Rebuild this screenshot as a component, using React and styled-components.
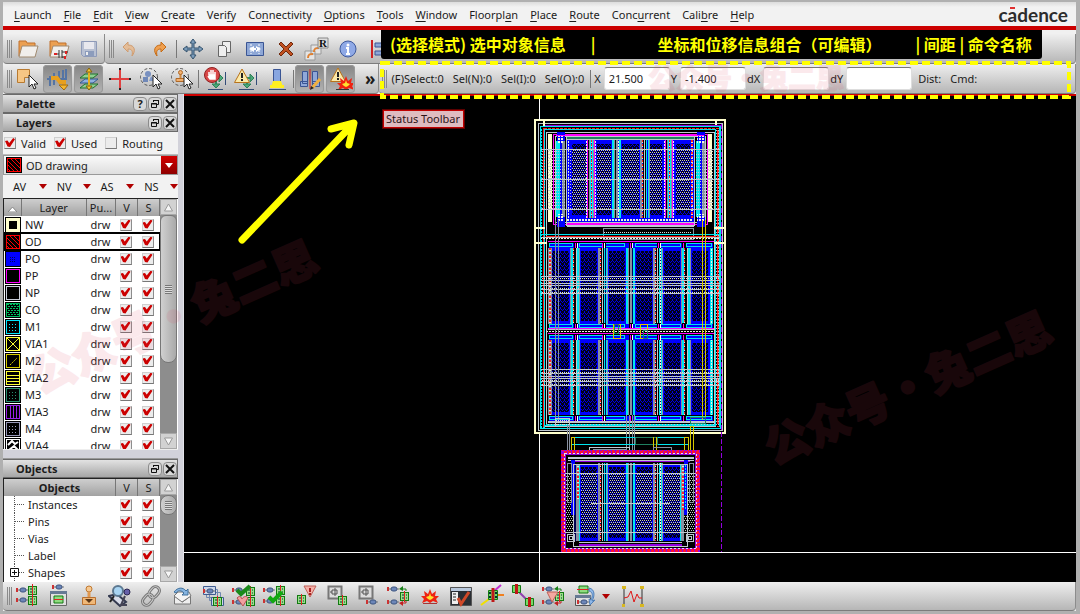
import React, { useState } from 'react';
import styled, { createGlobalStyle, css } from 'styled-components';

const GlobalStyle = createGlobalStyle`
  * {
    box-sizing: border-box;
  }

  body {
    margin: 0;
    background: #b0b0b0;
    color: #1c1c1c;
    font-family: "Noto Sans", "Noto Sans CJK SC", sans-serif;
    font-size: 11px;
    line-height: 17px;
  }

  button, input, select {
    font: inherit;
    color: inherit;
  }
`;

const Window = styled.div`
  position: relative;
  display: flex;
  flex-direction: column;
  height: 100vh;
  overflow: hidden;
  background: #f0f0f0;
  border: solid #b0b0b0;
  border-width: 2px 4px 3px 3px;
`;

const MenuBar = styled.nav`
  display: flex;
  align-items: center;
  gap: 12px;
  height: 28px;
  flex: none;
  padding: 0 8px 0 11px;
  background: linear-gradient(#dcdcdc, #f2f2f2 5px);
  border-bottom: 4px solid #cc0000;
`;

const MenuItem = styled.button`
  border: 0;
  padding: 0;
  background: none;
  white-space: nowrap;
  cursor: pointer;

  u {
    text-underline-offset: 2px;
  }
`;

const Logo = styled.div`
  margin-left: auto;
  font-family: Lato, sans-serif;
  font-weight: bold;
  font-size: 19px;
  color: #2c2c2c;
`;

const Macron = styled.span`
  position: relative;

  &::before {
    content: '';
    position: absolute;
    top: 4px;
    left: 2px;
    right: 2px;
    height: 2px;
    background: #e03030;
  }
`;

const Toolbars = styled.div`
  position: relative;
  flex: none;
  padding-top: 4px;
`;

const ToolRow = styled.div`
  display: flex;
  height: 30px;
`;

const barLook = css`
  display: flex;
  align-items: center;
  gap: 2px;
  padding: 0 1px;
  background: linear-gradient(#efefef, #b6b6b6);
  border-right: 1px solid #8c8c8c;
  border-bottom: 1px solid #7c7c7c;
  border-radius: 0 0 4px 4px;
`;

const ToolGroup = styled.div`
  ${barLook}
  flex: ${p => (p.$grow ? 1 : 'none')};
`;

const Grip = styled.span`
  flex: none;
  width: 5px;
  height: 18px;
  margin: 0 -2px 0 3px;
  border: solid #8a8a8a;
  border-width: 0 1px;
  background: linear-gradient(90deg, transparent 1px, #8a8a8a 1px, #8a8a8a 2px, transparent 2px);
`;

const Separator = styled.span`
  flex: none;
  width: 1px;
  height: 18px;
  margin-right: -1px;
  background: #777;
`;

const ToolButton = styled.button`
  flex: none;
  display: flex;
  align-items: center;
  justify-content: center;
  width: 29px;
  height: 28px;
  padding: 0;
  border: 0;
  border-radius: 4px;
  background: ${p => (p.$on ? 'linear-gradient(#858585, #b4b4b4)' : 'none')};
  box-shadow: ${p => (p.$on ? 'inset 0 0 0 1px #999' : 'none')};
  cursor: pointer;

  &:hover {
    background-color: #cfcfcf;
  }
`;

const More = styled.button`
  margin: 0 2px 0 8px;
  padding: 0;
  border: 0;
  background: none;
  font-size: 17px;
  font-weight: bold;
`;

const StatusBar = styled.div`
  ${barLook}
  flex: 1;
  gap: 4px;
  padding: 0;
`;

const StatusGroup = styled.div`
  display: flex;
  align-items: center;
  gap: 9px;
  padding: 0 2px;
  white-space: nowrap;
`;

const CoordGroup = styled.div`
  display: flex;
  align-items: center;
  gap: 1px;
`;

const Coord = styled.label`
  display: flex;
  align-items: center;
  gap: 3px;
`;

const CoordInput = styled.input`
  width: 66px;
  height: 23px;
  padding: 0 4px;
  border: 1px solid #ddd;
  border-top-color: #777;
  border-radius: 3px;
  background: #fff;
`;

const Banner = styled.div`
  position: absolute;
  top: 0;
  left: 378px;
  display: flex;
  align-items: center;
  height: 29px;
  padding: 0 10px 0 9px;
  border-radius: 0 0 3px 3px;
  background: #000;
  color: #ffff00;
  font-family: "Noto Sans CJK SC", sans-serif;
  font-weight: bold;
  font-size: 16px;
  white-space: nowrap;
  z-index: 2;
`;

const BannerPart = styled.span`
  margin-left: ${p => p.$gap || 0}px;
`;

const DashedFrame = styled.svg`
  position: absolute;
  top: 30px;
  left: 377px;
  width: calc(100% - 386px);
  height: 40px;
  pointer-events: none;
  z-index: 3;
  overflow: visible;
`;

const Body = styled.main`
  display: flex;
  flex: 1;
  min-height: 0;
`;

const Side = styled.aside`
  display: flex;
  flex-direction: column;
  flex: none;
  width: 181px;
  padding-right: 5px;
  background: #d2d2da;
  border-right: 1px solid #e4e4ea;
`;

const PanelHead = styled.header`
  display: flex;
  align-items: center;
  gap: 1px;
  height: 19px;
  flex: none;
  padding: 0 0 0 13px;
  background: linear-gradient(#e2e2e2, #a6a6a6);
  border: 1px solid #6a6a6a;
  border-width: 1px 1px 1px 0;
`;

const PanelTitle = styled.h2`
  flex: 1;
  margin: 0;
  font-size: 11px;
  font-weight: bold;
`;

const HeadButton = styled.button`
  display: flex;
  align-items: center;
  justify-content: center;
  width: 14px;
  height: 14px;
  padding: 0;
  border: 1px solid #8c8c8c;
  border-radius: 4px;
  background: #d8d8d8;
`;

const Checks = styled.div`
  display: flex;
  align-items: center;
  height: 23px;
  flex: none;
  gap: 8px;
  padding-left: 1px;
  background: #f2f2f2;
  border-bottom: 1px solid #bbb;
`;

const CheckLabel = styled.label`
  display: flex;
  align-items: center;
  gap: 5px;
`;

const Tick = styled.input.attrs({ type: 'checkbox' })`
  appearance: none;
  position: relative;
  display: block;
  width: 12px;
  height: 12px;
  margin: 0;
  border: 1px solid #cfcfcf;
  border-right-color: #8d8d8d;
  border-bottom-color: #777;
  background: #ececec;

  &:checked::after {
    content: '';
    position: absolute;
    inset: 0;
    background: #cc0000;
    clip-path: polygon(0 30%, 25% 25%, 42% 50%, 82% 0, 100% 12%, 50% 90%, 25% 85%);
  }
`;

const Combo = styled.label`
  position: relative;
  display: flex;
  align-items: center;
  gap: 4px;
  flex: none;
  height: 20px;
  padding-left: 2px;
  background: linear-gradient(#fafafa, #dedede);
  border: 1px solid #999;
`;

const ComboSelect = styled.select`
  appearance: none;
  flex: 1;
  min-width: 0;
  height: 18px;
  padding: 0;
  border: 0;
  background: none;
`;

const Caret = styled.span`
  width: 0;
  height: 0;
  border: 4px solid transparent;
  border-top: 5px solid ${p => p.$color || '#b00000'};
  border-bottom: 0;
`;

const ComboArrow = styled.span`
  display: flex;
  align-items: center;
  justify-content: center;
  width: 16px;
  height: 18px;
  background: linear-gradient(#d40000, #8e0000);
`;

const Filters = styled.div`
  display: grid;
  grid-template-columns: repeat(4, 1fr);
  height: 23px;
  flex: none;
  background: #f2f2f2;
`;

const FilterButton = styled.button`
  display: flex;
  align-items: center;
  justify-content: space-between;
  padding: 0 0 0 10px;
  border: 0;
  background: none;
`;

const ListBox = styled.div`
  display: flex;
  flex: ${p => (p.$fill ? '1' : 'none')};
  height: ${p => (p.$fill ? 'auto' : '104px')};
  min-height: 0;
  overflow: hidden;
  background: #fff;
  border: solid #222;
  border-width: 1px 0 0 1px;
`;

const Table = styled.table`
  flex: 1;
  align-self: flex-start;
  table-layout: fixed;
  border-collapse: collapse;
`;

const Th = styled.th`
  width: ${p => (p.$w ? p.$w + 'px' : 'auto')};
  height: 17px;
  padding: 0;
  background: linear-gradient(#cecece, #a2a2a2);
  border-right: 1px solid #777;
  font-weight: ${p => (p.$bold ? 'bold' : 'normal')};
`;

const Row = styled.tr`
  height: 17px;
  outline: ${p => (p.$active ? '2px solid #000' : 'none')};
  outline-offset: -1px;
`;

const Td = styled.td`
  height: 17px;
  padding: 0 0 0 ${p => p.$pad || 0}px;
  line-height: 16px;
`;

const ScrollBar = styled.div`
  display: flex;
  flex-direction: column;
  flex: none;
  width: 17px;
  margin-right: 1px;
  background: #8d8d8d;
`;

const ScrollButton = styled.button`
  display: flex;
  align-items: center;
  justify-content: center;
  height: 16px;
  padding: 0;
  border: 1px solid #a8a8a8;
  background: #d2d2d2;
`;

const Thumb = styled.div`
  display: flex;
  align-items: center;
  justify-content: center;
  height: ${p => p.$size};
  border: 1px solid #777;
  border-radius: ${p => (p.$round ? '8px' : '6px 6px 8px 8px')};
  background: linear-gradient(90deg, #d0d0d0, #a9a9a9);

  &::after {
    content: '';
    width: 7px;
    height: 9px;
    background: repeating-linear-gradient(#777 0 1px, #ddd 1px 2px);
  }
`;

const Track = styled.div`
  flex: 1;
`;

const Gap = styled.div`
  flex: none;
  height: 10px;
  border-top: 1px solid #eee;
  border-bottom: 1px solid #999;
`;

const TreeCell = styled.span`
  display: flex;
  align-items: center;
  gap: 3px;
  padding-left: 6px;
`;

const Canvas = styled.section`
  position: relative;
  flex: 1;
  min-width: 0;
  background: #000;
  border-top: 2px solid #cc0000;
`;

const Drawing = styled.svg`
  position: absolute;
  inset: 0;
  width: 100%;
  height: 100%;
`;

const Tooltip = styled.div`
  position: absolute;
  top: 14px;
  left: 199px;
  padding: 0 3px 0 2px;
  border: 1px solid #c00000;
  outline: 1px solid #5c0000;
  background: #dfbcc0;
  color: #2c1418;
  line-height: 16px;
`;

const BottomBar = styled.footer`
  ${barLook}
  flex: none;
  height: 29px;
`;

const DropMark = styled.button`
  display: flex;
  padding: 0 6px 0 1px;
  border: 0;
  background: none;
`;

const Watermark = styled.svg`
  position: absolute;
  inset: 0;
  width: 100%;
  height: 100%;
  pointer-events: none;
  z-index: 4;
  opacity: 0.11;
  fill: #e04060;
  stroke: #e04060;
  stroke-linejoin: round;
  font-family: "Noto Sans CJK SC", sans-serif;
  font-weight: 900;
  text-anchor: middle;
`;

/* ---------- icons ---------- */

const Ico = ({ children, w = 24 }) => (
  <svg width={w} height="24" viewBox={`0 0 ${w} 24`} fill="none" aria-hidden="true">{children}</svg>
);

const Pin = ({ x, y }) => (
  <g transform={`translate(${x} ${y})`}>
    <path d="M0 0v4" stroke="#c33" strokeWidth="2" />
    <path d="M1 2h3M9 2h2" stroke="#777" />
    <rect x="3" y="0" width="6" height="4" rx="2" fill="#6c86b8" stroke="#3d5580" />
  </g>
);

const Cell = ({ x, y }) => (
  <g transform={`translate(${x} ${y})`}>
    <rect x="0.5" y="0.5" width="8" height="8" fill="#9be08a" stroke="#127a12" />
    <path d="M2 3h2M2 6h2M6 3h1M6 6h1" stroke="#033" />
    <path d="M4.5-1v11" stroke="#d22" />
  </g>
);

const Cursor = ({ x, y }) => (
  <path transform={`translate(${x} ${y})`} d="M0 0v12l3-3 2 5 2-1-2-4h4z" fill="#fff" stroke="#222" />
);

const Bang = ({ x, y }) => (
  <g transform={`translate(${x} ${y})`}>
    <path d="M7 0l2 5 4-3-1 5 4 0-3 3 2 4-5-2-3 2-3-2-5 2 2-4-3-3 4 0-1-5 4 3z" fill="#ee2211" />
    <path d="M7 4l1 3 3 1-2 2-2 1-2-1-2-2 3-1z" fill="#ffe030" />
  </g>
);

const Gate = () => (
  <g>
    <path d="M13 20v-6M12 11h8" stroke="#2f9060" strokeWidth="2" />
    <path d="M16 7l4 4-4 4zM9 17h8l-4 4z" fill="#4aa878" stroke="#2f8058" />
  </g>
);

const Wall = () => <path d="M22.500 5v13M5 22.500h15" stroke="#334c78" />;

const Warn = ({ x, y }) => (
  <g transform={`translate(${x} ${y})`}>
    <path d="M8 1l7.500 13.500H.5z" fill="#fbe9a8" stroke="#b8731c" strokeLinejoin="round" />
    <path d="M8 5v5M8 11v2" stroke="#222" strokeWidth="2" />
  </g>
);

const Folder = ({ children }) => (
  <Ico>
    <path d="M4 19V4h7l1 2h8v4" fill="#eba052" stroke="#c0702c" />
    <path d="M4 20L7 9h16l-3 11z" fill="#f1efec" stroke="#a08a70" />
    {children}
  </Ico>
);

const icons = {
  open: <Folder />,
  openCell: <Folder><path d="M9 17h4M13 13v8M16 13v8M16 15h6M16 20h4" stroke="#333" /><path d="M8 17h3M20 14v3M19 19v3" stroke="#d22" strokeWidth="2" /></Folder>,
  save: <Ico><path d="M4.500 4.500h15v15h-13l-2-2z" fill="#b8c0d2" stroke="#8e9ab8" /><path d="M7 5h10v7H7z" fill="#e8e8ee" /><path d="M8 14h9v5H8z" fill="#8c9cbc" /><path d="M10 15v3" stroke="#eee" strokeWidth="2" /></Ico>,
  undo: <Ico><path d="M6 10l5-5v3c7 0 8 6 4 11 1-5 0-7-4-7v3z" fill="#e4bd98" stroke="#cf9c70" /></Ico>,
  redo: <Ico><path d="M18 10l-5-5v3c-7 0-8 6-4 11-1-5 0-7 4-7v3z" fill="#f0a050" stroke="#c46a14" /></Ico>,
  move: <Ico><path d="M12 2l3 4h-2v5h5V9l4 3-4 3v-2h-5v5h2l-3 4-3-4h2v-5H6v2l-4-3 4-3v2h5V6H9z" fill="#7b9bb9" stroke="#34536f" /></Ico>,
  copy: <Ico><path d="M10.500 4.500h8v11h-8z" fill="#eee" stroke="#666" /><path d="M6.500 8.500h6l2 2v9h-8z" fill="#eee" stroke="#666" /></Ico>,
  stretch: <Ico><path d="M3.500 5.500h17v13h-17z" fill="#8ea7d6" stroke="#3a5594" /><path d="M8 7v10M16 7v10" stroke="#fff" strokeDasharray="2 1" /><path d="M11 9v6l-5-3zM13 9v6l5-3zM10 11h4v2h-4z" fill="#fff" /></Ico>,
  remove: <Ico><path d="M5 7l2-2 5 5 5-5 2 2-5 5 5 5-2 2-5-5-5 5-2-2 5-5z" fill="#c05020" stroke="#70280c" /></Ico>,
  repeat: <Ico w={26}><path d="M1 14h10v9H1zM7 8h10v9H7z" fill="#e4e4e4" stroke="#999" /><path d="M4 21c0-4 2-4 5-4M10 15c0-4 2-4 5-4" stroke="#e08030" strokeWidth="2" /><path d="M14 1h10v10H14z" fill="#ddd" stroke="#888" /><text x="15" y="10" fontSize="11" fontWeight="bold" fontFamily="Liberation Serif, serif" fill="#111">R</text></Ico>,
  info: <Ico><circle cx="12" cy="12" r="8" fill="#8fa9e6" stroke="#3f5a9c" /><circle cx="12" cy="8" r="1.500" fill="#fff" /><path d="M10 11h2v6M10 17h4" stroke="#fff" strokeWidth="2" /></Ico>,
  align: <Ico><path d="M5 3v18" stroke="#c22" strokeWidth="2" /><path d="M8 6h14v4H8zM8 14h10v4H8z" fill="#8ea7d6" stroke="#3a5594" /></Ico>,
  select: <Ico><path d="M2.500 2.500h12v8h-5v5h-7z" fill="#f6c684" stroke="#b87a30" /><Cursor x={14} y={8} /></Ico>,
  route: <Ico><path d="M4 9v10M8 6v12M13 4v7M17 3v8M20 2v9M1 12h20" stroke="#5474a4" strokeWidth="2" /><path d="M5 11h6l3 4h4v4" stroke="#e8a020" strokeWidth="4" /><path d="M13 18h9l-4 5z" fill="#f6b830" stroke="#a06a10" /></Ico>,
  layers: <Ico><path d="M3 16l5-4h13l-5 4z" fill="#8fb0e0" stroke="#345a90" /><path d="M3 11l5-4h13l-5 4z" fill="#8fd090" stroke="#237030" /><path d="M3 21l5-4h13l-5 4z" fill="#8fd090" stroke="#237030" /><path d="M12 5v14" stroke="#e8b020" strokeWidth="2" /><path d="M9 5l3-4 3 4zM9 19l3 4 3-4z" fill="#f6c830" stroke="#806010" /></Ico>,
  cross: <Ico><path d="M12 2v20M1 12h22" stroke="#e04040" strokeWidth="2" /><path d="M12 1v2M12 21v2M1 12h2M21 12h2" stroke="#222" strokeWidth="2" /></Ico>,
  lasso: <Ico><circle cx="10" cy="10" r="8.500" stroke="#555" strokeDasharray="3 2" /><circle cx="9" cy="7" r="3" fill="#7890c0" /><path d="M4 10h5v5H4z" fill="#6f88b8" /><path d="M12 9l4 5h-6z" fill="#8098c8" /><Cursor x={14} y={8} /></Ico>,
  lassoPin: <Ico><circle cx="10" cy="10" r="8.500" stroke="#555" strokeDasharray="3 2" /><path d="M6 11.500h9v3H6z" fill="#f2b070" stroke="#b06a28" /><path d="M10.500 6v5" stroke="#d08840" strokeWidth="2" /><circle cx="10.500" cy="5.500" r="2" fill="#f2b070" stroke="#b06a28" /><Cursor x={14} y={8} /></Ico>,
  stop: <Ico><Wall /><Gate /><circle cx="9" cy="8" r="7.500" fill="#d84848" stroke="#902020" /><path d="M6 8V5M8 8V3M10 8V3M12 8V5M6 8h6v4H7L5 9" stroke="#fff" strokeWidth="1.500" fill="#fff" /></Ico>,
  warn: <Ico><Wall /><Gate /><Warn x={0} y={1} /></Ico>,
  highlight: <Ico><path d="M8.500 2.500h7v12h-7z" fill="#88a6e0" stroke="#3a5594" /><path d="M8 14h8l2 6H6z" fill="#ffee20" /><path d="M5 19.500h14" stroke="#ffee20" strokeWidth="3" /><path d="M4 22.500h17" stroke="#334c78" /></Ico>,
  alignEdit: <Ico><path d="M4.500 4.500h5v12h-5zM14.500 4.500h5v12h-5zM2.500 14.500h7v5h-7zM14.500 14.500h7v5h-7z" fill="#90a8d8" stroke="#3a5594" /><path d="M12 2v20" stroke="#d22" /><path d="M22 12l-8 9" stroke="#f0b040" strokeWidth="3" /><path d="M13 19l-1 4 4-2z" fill="#222" /></Ico>,
  warnBang: <Ico><Warn x={1} y={0} /><Bang x={10} y={9} /><path d="M7 22.500h13" stroke="#333" /></Ico>,

  pinCells: <Ico><Pin x={2} y={4} /><Pin x={2} y={14} /><Cell x={13} y={2} /><Cell x={13} y={12} /><path d="M17.500 0v22" stroke="#d22" /></Ico>,
  panelCell: <Ico><path d="M4.500 8.500h16v13h-16z" fill="#e0e0e0" stroke="#666" /><path d="M4 7h17v3H4z" fill="#667a94" /><Pin x={7} y={1} /><path d="M8 12h9v7H8z" fill="#8fdc80" stroke="#127a12" /><path d="M8 15.500h9" stroke="#d22" /></Ico>,
  stamp: <Ico><circle cx="12" cy="5" r="3" fill="#f6c890" stroke="#c07830" /><path d="M12 8v6" stroke="#e09850" strokeWidth="3" /><path d="M5.500 13.500h13v7h-13z" fill="#f0b878" stroke="#b87030" /><path d="M8 15h8l-4 4z" fill="#5c3818" /></Ico>,
  inspect: <Ico><path d="M1 12l8-2 9 8-6 4z" fill="#d8dce8" stroke="#343a50" strokeWidth="2" /><circle cx="10" cy="7" r="5" fill="#a8d4f2" stroke="#5c7890" strokeWidth="2" /><path d="M6 12l-4 6" stroke="#222" strokeWidth="2" /><circle cx="19" cy="8" r="3" fill="#6660a8" stroke="#2c2850" /><path d="M17 12l-4 9h6" stroke="#445" strokeWidth="2" /></Ico>,
  link: <Ico><g transform="rotate(-50 12 12)" stroke="#777"><rect x="1" y="8" width="12" height="8" rx="4" strokeWidth="3" /><rect x="11" y="8" width="12" height="8" rx="4" strokeWidth="3" /><rect x="1" y="8" width="12" height="8" rx="4" stroke="#ccc" /><rect x="11" y="8" width="12" height="8" rx="4" stroke="#ccc" /></g></Ico>,
  mail: <Ico><path d="M4.500 12v8h16v-8l-8 6z" fill="#eee" stroke="#777" /><path d="M4 12l4-4h11l2 4-9 6z" fill="#f4f4f4" stroke="#777" /><path d="M4 8c4-5 9-5 12-1l2-2v6h-6l2-2c-3-3-6-3-8 0z" fill="#86b4e0" stroke="#40709c" /></Ico>,
  stackA: <Ico><path d="M5.500 5.500h11v8h-11zM8.500 8.500h11v8h-11z" stroke="#7088b0" /><path d="M2.500 2.500h12v8h-12zM10.500 13.500h12v8h-12z" fill="#cdd8ea" stroke="#3f5c90" /><Pin x={3} y={5} /><Cell x={12} y={13} /></Ico>,
  checkBad: <Ico><Pin x={1} y={4} /><Pin x={1} y={16} /><Cell x={14} y={3} /><Cell x={14} y={13} /><path d="M5 14c3-3 4-1 5 1 1-2 4-4 6-1l-5 8z" fill="#f2a0a0" stroke="#b85050" /><path d="M5 6l4 4 9-8" stroke="#1a8a1a" strokeWidth="4" /></Ico>,
  checkOk: <Ico><Pin x={1} y={4} /><Pin x={1} y={15} /><Cell x={13} y={2} /><Cell x={13} y={12} /><path d="M6 13l4 4 9-9" stroke="#12a812" strokeWidth="4" /></Ico>,
  cellWarn: <Ico><path d="M10 2h12l-6 11z" fill="#f4b0a8" stroke="#c06058" /><path d="M16 4v4M16 9v2" stroke="#a82020" strokeWidth="2" /><Cell x={3} y={11} /></Ico>,
  viewCell: <Ico><path d="M3.500 2.500h13v12h-13z" fill="#ddd" stroke="#777" strokeWidth="2" /><path d="M7 6h5v4H7zM10 4v8M5 8h2" stroke="#555" /><Cell x={13} y={12} /></Ico>,
  viewPin: <Ico><path d="M3.500 2.500h13v12h-13z" fill="#ddd" stroke="#777" strokeWidth="2" /><path d="M7 6h5v4H7zM10 4v8M5 8h2" stroke="#555" /><Pin x={11} y={16} /></Ico>,
  pinSwap: <Ico><Pin x={1} y={3} /><Pin x={1} y={16} /><Cell x={13} y={8} /><path d="M19 7V5h-5" stroke="#188018" /><path d="M16 2l-4 3 4 2z" fill="#188018" /><path d="M19 17v2h-5" stroke="#c02020" /><path d="M16 17l-4 2 4 3z" fill="#c02020" /></Ico>,
  bang: <Ico><Bang x={5} y={5} /><path d="M5 19.500h14" stroke="#a33" /></Ico>,
  checkList: <Ico><path d="M1.500 3.500h21v18h-21z" fill="#2a2e34" stroke="#555" /><path d="M2 4h20v3H2z" fill="#b8c8dc" /><path d="M3 8h6v12H3z" fill="#eee" /><path d="M4 10h3M4 13h3M4 16h3" stroke="#222" /><path d="M9 14l3 6 8-12" stroke="#d04828" strokeWidth="3" /></Ico>,
  flightA: <Ico><path d="M1 21l8-6" stroke="#f0e000" strokeWidth="2" /><path d="M13 8l8-7" stroke="#c030d0" strokeWidth="2" /><path d="M16 11h8" stroke="#f08020" strokeWidth="2" /><path d="M8.500 6.500h9v9h-9z" fill="#78d868" stroke="#127a12" /><path d="M13 4v14" stroke="#c01818" strokeWidth="3" /><path d="M9 9h2M9 13h2M15 9h2M15 13h2" stroke="#033" strokeWidth="2" /></Ico>,
  flightB: <Ico><path d="M7 7l11 11" stroke="#9040b0" strokeWidth="2" /><path d="M1.500 1.500h8v7h-8zM14.500 14.500h8v7h-8z" fill="#78d868" stroke="#127a12" /><path d="M5.500 0v10M18.500 13v10" stroke="#c01818" strokeWidth="3" /></Ico>,
  swapWarn: <Ico><Pin x={1} y={3} /><Pin x={1} y={16} /><Cell x={13} y={8} /><path d="M5 8h11l-6 10z" fill="#f4a8a0" stroke="#c06058" /><path d="M19 7V5h-5" stroke="#188018" /><path d="M16 2l-4 3 4 2z" fill="#188018" /><path d="M19 17v2h-5" stroke="#c02020" /><path d="M16 17l-4 2 4 3z" fill="#c02020" /></Ico>,
  update: <Ico><path d="M2.500 12.500h15v9h-15z" fill="#e0e0e0" stroke="#555" /><path d="M2 11h16v3H2z" fill="#667a94" /><path d="M6 2h9v7H6z" fill="#8fdc80" stroke="#127a12" /><path d="M4 5.500h13" stroke="#d22" /><Pin x={5} y={16} /><path d="M16 4c6 1 6 8 3 13l3-1-5 5-1-6 2 1c2-4 2-8-2-9z" fill="#90b8e8" stroke="#5080b8" /></Ico>,
  wave: <Ico><path d="M3 4v18M21 4v18" stroke="#333" /><path d="M1 2h4v3H1zM19 2h4v3h-4zM1 20h3v3H1zM19 20h4v3h-4z" fill="#d8b820" /><path d="M3 14l4-1 3-6 3 11 3-8 2 4h3" stroke="#e01818" /></Ico>,
};

const menus = [
  ['', 'L', 'aunch'], ['', 'F', 'ile'], ['', 'E', 'dit'], ['', 'V', 'iew'],
  ['', 'C', 'reate'], ['Veri', 'f', 'y'], ['Co', 'n', 'nectivity'], ['', 'O', 'ptions'],
  ['', 'T', 'ools'], ['', 'W', 'indow'], ['Floorpl', 'a', 'n'], ['', 'P', 'lace'],
  ['', 'R', 'oute'], ['Conc', 'u', 'rrent'], ['Cali', 'b', 're'], ['', 'H', 'elp'],
];

const layers = [
  { name: 'NW', color: '#ffffcc', kind: 'thick' },
  { name: 'OD', color: '#ff0000', kind: 'hatch' },
  { name: 'PO', color: '#0000ff', kind: 'solid' },
  { name: 'PP', color: '#ff00ff' },
  { name: 'NP', color: '#c8ccd8' },
  { name: 'CO', color: '#00c060', kind: 'mesh' },
  { name: 'M1', color: '#00e5ff', kind: 'dots' },
  { name: 'VIA1', color: '#ffff33', kind: 'x' },
  { name: 'M2', color: '#d8cc00', kind: 'diag' },
  { name: 'VIA2', color: '#ffff33', kind: 'rows' },
  { name: 'M3', color: '#2a9070', kind: 'dots' },
  { name: 'VIA3', color: '#9a20e8', kind: 'cols' },
  { name: 'M4', color: '#9898b8', kind: 'dots' },
  { name: 'VIA4', color: '#ffffff', kind: 'zig' },
];

const fills = {
  hatch: c => <path d="M1 3l10 10M1 7l6 6M4 1l9 9M8 1l5 5M1 11l2 2" stroke={c} />,
  solid: c => <><rect x="1" y="1" width="12" height="12" fill={c} /><path d="M4 5.500h6M4 7.500h6M4 9.500h6" stroke="#000060" strokeDasharray="1 1" /></>,
  mesh: c => <><path d="M1 1.500h12M1 5.500h12M1 9.500h12" stroke={c} strokeDasharray="2 1" /><path d="M2 3.500h11M2 7.500h11M2 11.500h11" stroke={c} strokeDasharray="2 1" /></>,
  dots: c => <path d="M3 4.500h9M3 7.500h9M3 10.500h9" stroke={c} strokeDasharray="1 2" />,
  x: c => <path d="M1 1l12 12M13 1L1 13" stroke={c} />,
  diag: c => <path d="M4 11l7-7" stroke={c} strokeDasharray="2 1" />,
  zig: c => <path d="M2 6l4-4 3 3 3-2M3 11l5-4 4 4" stroke={c} strokeWidth="2" />,
  rows: c => <path d="M1 4.500h12M1 7.500h12M1 10.500h12" stroke={c} />,
  cols: c => <path d="M4.500 1v12M7.500 1v12M10.500 1v12" stroke={c} />,
  thick: c => <rect x="2" y="2" width="10" height="10" stroke={c} strokeWidth="2" />,
};

const SwatchSvg = styled.svg`
  display: block;
`;

const Swatch = ({ color, kind }) => (
  <SwatchSvg width="16" height="16" viewBox="-1 -1 16 16" fill="none" aria-hidden="true">
    <rect x="-1" y="-1" width="16" height="16" fill="#000" />
    <rect x="0.5" y="0.5" width="13" height="13" stroke={color} />
    {fills[kind] && fills[kind](color)}
  </SwatchSvg>
);

/* ---------- layout view ---------- */

const CYAN = '#00e5ee';
const SILVER = '#c0c8d0';
const GRAY = '#8890a0';
const CREAM = '#ffffcc';
const MAGENTA = '#ff00ff';
const BLUE = '#0000ff';
const PURPLE = '#9400e0';
const YELLOW = '#d8c800';
const GREEN = '#208060';

const H = ({ y, x1, x2, c = SILVER, d, w = 1 }) => <rect x={x1} y={y} width={x2 - x1} height={w} fill={d ? `url(#${d})` : c} />;
const V = ({ x, y1, y2, c = SILVER, d, w = 1 }) => <rect x={x} y={y1} width={w} height={y2 - y1} fill={d ? `url(#${d})` : c} />;
const Box = ({ x1, y1, x2, y2, c, w = 1, dash }) => (
  <rect x={x1 + w / 2} y={y1 + w / 2} width={x2 - x1 - w} height={y2 - y1 - w} fill="none" stroke={c} strokeWidth={w} strokeDasharray={dash} />
);

// gate fingers: blue frame with a hatched core
const Finger = ({ x1, x2, y1, y2, dots, inset = 3 }) => (
  <g>
    <rect x={x1 - 2} y={y1} width={x2 - x1 + 4} height={y2 - y1} fill={BLUE} />
    <rect x={x1} y={y1 + inset} width={x2 - x1} height={y2 - y1 - inset * 2} fill="url(#poly)" />
    {dots && <rect x={x1} y={dots[0]} width={x2 - x1} height={dots[1] - dots[0]} fill="url(#dots)" />}
  </g>
);

const rails = {
  a: [[GRAY], [CYAN], [CYAN], ['red'], ['#000'], ['#000'], [SILVER], [CYAN], [CYAN], [GRAY]],
  b: [[GRAY], [GRAY], ['red'], ['#000'], [SILVER], ['#000'], [CYAN], ['white'], [CYAN], [GRAY]],
  c: [[CYAN], [CYAN], [GRAY], ['#000'], [GRAY], [GRAY], ['white'], [CYAN], [CYAN]],
  d: [['white'], [MAGENTA], ['#000'], [GRAY], [CYAN], ['red'], [CYAN], [GRAY], [MAGENTA], ['white']],
};

const Rail = ({ x, y1, y2, kind }) => rails[kind].map(([c], i) => (
  <V key={i} x={x + i} y1={y1} y2={y2} c={c} d={c === 'red' ? 'redDash' : c === 'white' ? 'whiteDash' : null} />
));

const midFingers = [[552, 569], [581, 597], [609, 625], [636, 652], [664, 680], [692, 708]];
const midRails = [[570, 'a'], [598, 'b'], [626, 'c'], [653, 'b'], [681, 'a']];
const topFingers = [[572, 586], [597, 611], [622, 639], [649, 662], [676, 690]];
const topRails = [[586, 'd'], [612, 'c'], [640, 'b'], [664, 'd']];
const lowFingers = [[581, 597], [609, 625], [636, 652], [664, 680]];
const lowRails = [[598, 'b'], [626, 'c'], [653, 'b']];

const MidBlock = ({ y1, y2 }) => (
  <g>
    <rect x="548" y={y1} width="165" height={y2 - y1} fill="#000060" />
    {midFingers.map(([a, b]) => <Finger key={a} x1={a} x2={b} y1={y1} y2={y2} />)}
    {midRails.map(([x, k]) => <Rail key={x} x={x} y1={y1} y2={y2} kind={k} />)}
    <V x={548} y1={y1} y2={y2} c={GRAY} w={4} />
    <V x={549} y1={y1} y2={y2} d="redDash" w={2} />
    <V x={710} y1={y1} y2={y2} c={CYAN} w={3} />
    <V x={711} y1={y1} y2={y2} d="whiteDash" />
  </g>
);

const BlueRow = ({ y, h = 5 }) => (
  <g>
    <rect x="549" y={y} width="164" height={h} fill={BLUE} />
    {[[549, 573], [579, 625], [635, 681], [686, 712]].map(([a, b]) => <Box key={a} x1={a} x2={b} y1={y} y2={y + h - 1} c={CYAN} />)}
    {[574, 602, 629, 657, 682].map(x => <rect key={x} x={x} y={y - 1} width="4" height={h + 1} fill="#000" />)}
    {[575, 602, 630, 658, 683].map(x => <rect key={x} x={x} y={y} width="1" height={h} fill={MAGENTA} />)}
    {[577, 604, 632, 660].map(x => <rect key={x} x={x} y={y} width="1" height={h} fill="#fff" />)}
  </g>
);

const ChipLayout = () => (
  <g shapeRendering="crispEdges">
    <defs>
      <pattern id="poly" width="4" height="4" patternUnits="userSpaceOnUse">
        <rect width="4" height="4" fill="#000018" />
        <path d="M0 0h1v1H0zM1 1h1v1H1zM2 2h1v1H2zM3 1h1v1H3zM0 3h1v1H0z" fill="#0000e0" />
      </pattern>
      <pattern id="dots" width="4" height="4" patternUnits="userSpaceOnUse">
        <path d="M0 0h1v1H0zM2 0h1v1H2zM1 2h1v1H1zM3 2h1v1H3z" fill="#c4ccc8" />
      </pattern>
      <pattern id="fine" width="2" height="3" patternUnits="userSpaceOnUse">
        <path d="M0 1h1v1H0z" fill="#c0c8d0" />
      </pattern>
      <pattern id="tight" width="2" height="2" patternUnits="userSpaceOnUse">
        <path d="M0 0h1v1H0z" fill="#d8dcdc" />
      </pattern>
      <pattern id="redDash" width="4" height="4" patternUnits="userSpaceOnUse">
        <path d="M0 0h4v2H0z" fill="#ff2020" />
        <path d="M0 2h4v1H0z" fill="#e8e8d0" />
      </pattern>
      <pattern id="whiteDash" width="3" height="3" patternUnits="userSpaceOnUse">
        <path d="M0 0h2v2H0z" fill="#f4f4e0" />
      </pattern>
      <pattern id="cyanDash" width="3" height="3" patternUnits="userSpaceOnUse">
        <path d="M0 0h2v2H0z" fill="#00e5ee" />
      </pattern>
    </defs>

    {/* outer wells */}
    <Box x1={534} y1={119} x2={726} y2={434} c={CREAM} w={2} />
    <Box x1={538} y1={123} x2={723} y2={431} c={SILVER} />
    <V x={543} y1={120} y2={126} c={CREAM} w={2} />
    <V x={715} y1={120} y2={126} c={CREAM} w={2} />
    <H y={125} x1={545} x2={722} c={PURPLE} />
    <Box x1={540} y1={126} x2={721} y2={429} c={CYAN} />
    <rect x="541" y="128" width="4" height="300" fill="url(#cyanDash)" />
    <Box x1={543} y1={128} x2={719} y2={427} c="#ff2020" dash="3 1" />
    <Box x1={544} y1={129} x2={716} y2={426} c={CYAN} />
    <Box x1={546} y1={132} x2={715} y2={425} c={SILVER} />
    <rect x="715" y="130" width="5" height="297" fill="url(#fine)" />
    <V x={717} y1={130} y2={424} c="#ff2020" w={1} />
    <V x={719} y1={127} y2={427} c={CYAN} />
    <V x={543} y1={130} y2={426} c="#ff2020" />
    <path d="M721.500 124V552" stroke={PURPLE} strokeDasharray="5 2" />

    {/* upper array */}
    <V x={548} y1={134} y2={222} c={CREAM} w={4} />
    <V x={708} y1={134} y2={222} c={CREAM} w={4} />
    <V x={549} y1={150} y2={210} d="dots" w={3} />
    <V x={709} y1={150} y2={210} d="dots" w={3} />
    <Box x1={553} y1={134} x2={708} y2={225} c={MAGENTA} />
    <Box x1={555} y1={136} x2={706} y2={223} c={SILVER} />
    {[557, 697].map(x => (
      <g key={x}>
        <rect x={x} y="132" width="8" height="95" fill={BLUE} />
        <rect x={x - 1} y="141" width="4" height="76" fill={CYAN} />
        <rect x={x + 5} y="141" width="3" height="76" fill={GRAY} />
        <rect x={x} y="136" width="7" height="8" fill="url(#whiteDash)" />
        <rect x={x} y="214" width="7" height="8" fill="url(#whiteDash)" />
      </g>
    ))}
    <rect x="567" y="139" width="127" height="83" fill={BLUE} />
    <Box x1={566} y1={137} x2={695} y2={226} c={SILVER} />
    <H y={134} x1={556} x2={704} d="whiteDash" w={2} />
    <H y={137} x1={567} x2={694} c={GREEN} w={2} />
    <H y={135} x1={556} x2={704} c={MAGENTA} />
    <H y={139} x1={566} x2={695} c={SILVER} />
    {topFingers.map(([a, b]) => <Finger key={a} x1={a} x2={b} y1={141} y2={218} dots={[150, 210]} />)}
    {topRails.map(([x, k]) => <Rail key={x} x={x} y1={140} y2={218} kind={k} />)}
    <V x={568} y1={140} y2={218} d="whiteDash" w={2} />
    <V x={691} y1={140} y2={218} d="redDash" w={2} />
    <rect x="541" y="150" width="30" height="60" fill="url(#fine)" />
    <rect x="692" y="150" width="28" height="60" fill="url(#fine)" />
    {[149, 179, 209].map(y => <H key={y} y={y} x1={541} x2={720} />)}
    <H y={219} x1={567} x2={692} d="whiteDash" w={2} />
    <H y={223} x1={567} x2={694} c={MAGENTA} w={2} />
    <H y={226} x1={567} x2={694} w={1} />
    <H y={227} x1={534} x2={545} c={CREAM} w={2} />
    <H y={227} x1={714} x2={726} c={CREAM} w={2} />
    <Box x1={603} y1={228} x2={694} y2={240} c={GRAY} />
    <H y={231} x1={604} x2={692} d="tight" w={2} />
    <H y={234} x1={540} x2={721} c={CYAN} />
    <H y={236} x1={546} x2={716} d="redDash" />
    <H y={238} x1={541} x2={720} d="whiteDash" w={2} />
    <H y={237} x1={541} x2={720} c={SILVER} />
    <H y={241} x1={548} x2={714} c={MAGENTA} />
    <H y={242} x1={534} x2={547} c={CREAM} w={2} />
    <H y={242} x1={714} x2={726} c={CREAM} w={2} />

    {/* middle array */}
    <BlueRow y={243} />
    <MidBlock y1={248} y2={324} />
    <BlueRow y={324} />
    <H y={328} x1={548} x2={714} c={MAGENTA} />
    <H y={329} x1={548} x2={714} c={SILVER} />
    <H y={331} x1={547} x2={714} d="whiteDash" w={2} />
    <H y={333} x1={548} x2={714} c={MAGENTA} />
    <BlueRow y={335} />
    <MidBlock y1={340} y2={415} />
    <BlueRow y={416} />
    {[276, 280, 283, 285, 289, 293, 369, 373, 376, 378, 381, 385].map(y => <H key={y} y={y} x1={541} x2={720} />)}
    {[278, 287, 291, 371, 379, 383].map(y => <H key={y} y={y} x1={541} x2={720} d="tight" w={2} />)}
    <Box x1={613} y1={324} x2={621} y2={339} c={YELLOW} />
    <Box x1={640} y1={324} x2={648} y2={339} c={YELLOW} />
    <Box x1={614} y1={324} x2={619} y2={334} c={GREEN} />
    <Box x1={643} y1={330} x2={648} y2={339} c={GREEN} />
    <V x={702} y1={220} y2={420} c={YELLOW} />
    <V x={705} y1={220} y2={420} c={YELLOW} />
    <V x={555} y1={220} y2={422} c={GRAY} />
    <V x={558} y1={220} y2={422} c={GRAY} />
    <H y={421} x1={548} x2={714} c={SILVER} w={2} />
    <H y={424} x1={545} x2={716} d="cyanDash" w={2} />
    <H y={426} x1={545} x2={716} c={SILVER} w={1} />
    <H y={428} x1={541} x2={720} c={CYAN} />
    <rect x="555" y="418" width="15" height="9" fill="url(#tight)" />
    <Box x1={555} y1={418} x2={570} y2={427} c={SILVER} />
    <Box x1={690} y1={417} x2={706} y2={424} c={GREEN} />

    {/* links to the lower array */}
    <V x={567} y1={425} y2={450} c={GRAY} />
    <V x={569} y1={425} y2={450} c={GRAY} />
    {[626, 629, 632, 634].map(x => <V key={x} x={x} y1={415} y2={460} c={GRAY} />)}
    <H y={437} x1={572} x2={688} c={CYAN} />
    <H y={440} x1={575} x2={686} d="cyanDash" />
    <H y={444} x1={572} x2={688} c={CYAN} />
    <Box x1={635} y1={437} x2={658} y2={445} c={GREEN} />
    <Box x1={571} y1={437} x2={575} y2={460} c={YELLOW} />
    <Box x1={684} y1={437} x2={689} y2={460} c={YELLOW} />
    <Box x1={690} y1={426} x2={694} y2={460} c={YELLOW} />
    <V x={653} y1={437} y2={460} c={YELLOW} />
    <V x={656} y1={437} y2={460} c={YELLOW} />
    <Box x1={589} y1={447} x2={630} y2={458} c={SILVER} />
    <Box x1={593} y1={449} x2={627} y2={458} c={GRAY} />
    <Box x1={653} y1={447} x2={672} y2={458} c={GRAY} />

    {/* lower array */}
    <Box x1={561} y1={450} x2={700} y2={553} c={PURPLE} w={5} />
    <Box x1={562} y1={451} x2={699} y2={552} c="#ff1030" w={3} dash="3 1" />
    <Box x1={564} y1={453} x2={697} y2={549} c="#e8e0f0" dash="2 2" />
    <Box x1={561} y1={450} x2={700} y2={553} c="#ff1030" dash="2 3" />
    <rect x="566" y="455" width="129" height="92" fill="#000" />
    <rect x="566" y="473" width="129" height="60" fill="url(#dots)" />
    <H y={457} x1={568} x2={694} c={SILVER} w={2} />
    <H y={460} x1={568} x2={694} c={SILVER} w={1} />
    <H y={461} x1={572} x2={690} c={PURPLE} />
    <rect x="574" y="464" width="110" height="77" fill="#000050" />
    {lowFingers.map(([a, b]) => <Finger key={a} x1={a} x2={b} y1={464} y2={541} dots={[473, 533]} />)}
    {lowRails.map(([x, k]) => <Rail key={x} x={x} y1={463} y2={541} kind={k} />)}
    {[571, 684].map(x => (
      <g key={x}>
        <V x={x} y1={460} y2={515} c={BLUE} w={4} />
        <V x={x + 1} y1={464} y2={510} d="cyanDash" w={2} />
      </g>
    ))}
    <V x={576} y1={464} y2={541} c={GRAY} w={3} />
    <V x={681} y1={464} y2={541} c={GRAY} w={3} />
    <V x={579} y1={464} y2={541} c={CYAN} />
    <V x={680} y1={464} y2={541} c={CYAN} />
    <V x={577} y1={466} y2={500} d="redDash" w={2} />
    <V x={682} y1={466} y2={510} d="redDash" w={2} />
    <Box x1={567} y1={463} x2={572} y2={503} c={GRAY} />
    <Box x1={689} y1={463} x2={694} y2={503} c={GRAY} />
    <Box x1={573} y1={464} x2={688} y2={547} c={SILVER} />
    <H y={473} x1={565} x2={696} />
    <H y={503} x1={591} x2={670} />
    <H y={532} x1={565} x2={696} />
    <Box x1={567} y1={534} x2={575} y2={542} c={SILVER} />
    <Box x1={686} y1={534} x2={694} y2={542} c={SILVER} />
    <Box x1={569} y1={536} x2={573} y2={540} c={SILVER} />
    <Box x1={688} y1={536} x2={692} y2={540} c={SILVER} />
    <H y={542} x1={579} x2={682} c={SILVER} />
    <H y={544} x1={579} x2={682} c={PURPLE} w={2} />
    <H y={546} x1={577} x2={684} c={SILVER} />
    <H y={548} x1={564} x2={697} d="cyanDash" />

    {/* origin axes */}
    <V x={539} y1={96} y2={120} c="#fff" />
    <V x={539} y1={434} y2={700} c="#fff" />
    <H y={552} x1={184} x2={2000} c="#fff" />
  </g>
);

const Brand = ({ size, dy }) => (
  <>
    {['公', '众', '号', '•', '兔', '二', '思'].map((ch, i) => <text key={ch} x={(i - 3) * size} y={dy} fontSize={size}>{ch}</text>)}
  </>
);

const Head = ({ title, help }) => (
  <PanelHead>
    <PanelTitle>{title}</PanelTitle>
    {help && <HeadButton aria-label="Help"><b>?</b></HeadButton>}
    <HeadButton aria-label={`Float ${title}`}>
      <svg width="10" height="10" fill="none" stroke="#111"><path d="M3.500 3V1.500h5v4H7M3 1.500h6M1.500 4.500h5v4h-5zM1 5h6" /></svg>
    </HeadButton>
    <HeadButton aria-label={`Close ${title}`}>
      <svg width="10" height="10" stroke="#111" strokeWidth="2"><path d="M1 1l8 8M9 1L1 9" /></svg>
    </HeadButton>
  </PanelHead>
);

const Scroll = ({ size, round }) => (
  <ScrollBar>
    <ScrollButton aria-label="Scroll up"><svg width="9" height="9"><path d="M.5 8h8L4.500 1z" fill="#f6f6f6" stroke="#999" /></svg></ScrollButton>
    <Thumb $size={size} $round={round} />
    <Track />
    <ScrollButton aria-label="Scroll down"><svg width="9" height="9"><path d="M.5 1h8L4.500 8z" fill="#f6f6f6" stroke="#999" /></svg></ScrollButton>
  </ScrollBar>
);

const Tool = ({ name, on }) => <ToolButton $on={on} aria-label={name}>{icons[name]}</ToolButton>;

const App = () => {
  const [active, setActive] = useState('OD');

  return (
    <Window>
      <GlobalStyle />
      <MenuBar>
        {menus.map(([a, b, c]) => <MenuItem key={a + b + c}>{a}<u>{b}</u>{c}</MenuItem>)}
        <Logo>c<Macron>a</Macron>dence</Logo>
      </MenuBar>

      <Toolbars>
        <ToolRow>
          <ToolGroup>
            <Grip />
            {['open', 'openCell', 'save'].map(n => <Tool key={n} name={n} />)}
          </ToolGroup>
          <ToolGroup $grow>
            <Grip />
            {['undo', 'redo'].map(n => <Tool key={n} name={n} />)}
            <Separator />
            {['move', 'copy', 'stretch', 'remove', 'repeat', 'info', 'align'].map(n => <Tool key={n} name={n} />)}
          </ToolGroup>
        </ToolRow>
        <ToolRow>
          <ToolGroup>
            <Grip />
            <Tool name="select" />
            <Tool name="route" on />
            <Tool name="layers" on />
            {['cross', 'lasso', 'lassoPin'].map(n => <Tool key={n} name={n} />)}
            <Separator />
            {['stop', 'warn', 'highlight'].map(n => <Tool key={n} name={n} />)}
            <Separator />
            <Tool name="alignEdit" on />
            <Tool name="warnBang" on />
            <More aria-label="More tools">»</More>
          </ToolGroup>
          <StatusBar>
            <Grip />
            <StatusGroup>
              <output>(F)Select:0</output>
              <output>Sel(N):0</output>
              <output>Sel(I):0</output>
              <output>Sel(O):0</output>
            </StatusGroup>
            <Separator />
            <CoordGroup>
              <Coord>X<CoordInput defaultValue="21.500" /></Coord>
              <Coord>Y<CoordInput defaultValue="-1.400" /></Coord>
              <Coord>dX<CoordInput /></Coord>
              <Coord>dY<CoordInput /></Coord>
            </CoordGroup>
            <StatusGroup>
              <output>Dist:</output>
              <output>Cmd:</output>
            </StatusGroup>
          </StatusBar>
        </ToolRow>
        <Banner>
          <BannerPart>(选择模式) 选中对象信息</BannerPart>
          <BannerPart $gap={25}>|</BannerPart>
          <BannerPart $gap={62}>坐标和位移信息组合（可编辑）</BannerPart>
          <BannerPart $gap={34}>| 间距 | 命令名称</BannerPart>
        </Banner>
        <DashedFrame aria-hidden="true">
          <rect x="2" y="3" width="100%" height="34" fill="none" stroke="#ffff00" strokeWidth="4" strokeDasharray="8 4" />
        </DashedFrame>
      </Toolbars>

      <Body>
        <Side>
          <Head title="Palette" help />
          <Head title="Layers" />
          <Checks>
            <CheckLabel><Tick defaultChecked />Valid</CheckLabel>
            <CheckLabel><Tick defaultChecked />Used</CheckLabel>
            <CheckLabel><Tick />Routing</CheckLabel>
          </Checks>
          <Combo>
            <Swatch color="#ff0000" kind="hatch" />
            <ComboSelect aria-label="Active layer"><option>OD drawing</option></ComboSelect>
            <ComboArrow><Caret $color="#fff" /></ComboArrow>
          </Combo>
          <Filters>
            {['AV', 'NV', 'AS', 'NS'].map(f => <FilterButton key={f}>{f}<Caret /></FilterButton>)}
          </Filters>
          <ListBox $fill>
            <Table>
              <thead>
                <tr>
                  <Th $w={17} aria-label="Sort"><svg width="9" height="6"><path d="M0 6h9L4.500 1z" fill="#fff" stroke="#888" /></svg></Th>
                  <Th>Layer</Th>
                  <Th $w={29}>Pu...</Th>
                  <Th $w={22}>V</Th>
                  <Th $w={22}>S</Th>
                </tr>
              </thead>
              <tbody>
                {layers.map(l => (
                  <Row key={l.name} $active={l.name === active} onClick={() => setActive(l.name)}>
                    <Td $pad={1}><Swatch color={l.color} kind={l.kind} /></Td>
                    <Td $pad={4}>{l.name}</Td>
                    <Td $pad={4}>drw</Td>
                    <Td $pad={4}><Tick defaultChecked aria-label={`${l.name} visible`} /></Td>
                    <Td $pad={4}><Tick defaultChecked aria-label={`${l.name} selectable`} /></Td>
                  </Row>
                ))}
              </tbody>
            </Table>
            <Scroll size="148px" />
          </ListBox>
          <Gap />
          <Head title="Objects" />
          <ListBox>
            <Table>
              <thead>
                <tr>
                  <Th $bold>Objects</Th>
                  <Th $w={22}>V</Th>
                  <Th $w={22}>S</Th>
                </tr>
              </thead>
              <tbody>
                {['Instances', 'Pins', 'Vias', 'Label', 'Shapes'].map((o, i) => (
                  <Row key={o}>
                    <Td>
                      <TreeCell>
                        <svg width="15" height="17" stroke="#555" fill="none" aria-hidden="true">
                          <path d="M4.500 0v17M5 8.500h10" strokeDasharray="1 1" />
                          {i === 4 && <path d="M.5 4.500h8v8h-8zM2 8.500h5M4.500 6v5" stroke="#111" fill="#fff" />}
                        </svg>
                        {o}
                      </TreeCell>
                    </Td>
                    <Td $pad={4}><Tick defaultChecked aria-label={`${o} visible`} /></Td>
                    <Td $pad={4}><Tick defaultChecked aria-label={`${o} selectable`} /></Td>
                  </Row>
                ))}
              </tbody>
            </Table>
            <Scroll size="20px" round />
          </ListBox>
        </Side>
        <Canvas>
          <Drawing aria-label="Layout view">
            <g transform="translate(-184 -96)">
              <ChipLayout />
              <path d="M242 240L352 125M331 129l23-6-5 22" fill="none" stroke="#ffff00" strokeWidth="7" strokeLinecap="round" strokeLinejoin="round" />
            </g>
          </Drawing>
          <Tooltip role="tooltip">Status Toolbar</Tooltip>
        </Canvas>
      </Body>

      <BottomBar>
        <Grip />
        {['pinCells', 'panelCell', 'stamp', 'inspect', 'link', 'mail', 'stackA', 'checkBad', 'checkOk', 'cellWarn',
          'viewCell', 'viewPin', 'pinSwap', 'bang', 'checkList', 'flightA', 'flightB', 'swapWarn', 'update'].map(n => <Tool key={n} name={n} />)}
        <DropMark aria-label="Update options"><Caret /></DropMark>
        <Tool name="wave" />
      </BottomBar>

      <Watermark aria-hidden="true">
        <g transform="translate(171 315) rotate(-24)" strokeWidth="2"><Brand size={44} dy={16} /></g>
        <g transform="translate(905 386) rotate(-24)" strokeWidth="2"><Brand size={44} dy={16} /></g>
        <g transform="translate(743 77)" strokeWidth="1"><Brand size={28} dy={10} /></g>
      </Watermark>
    </Window>
  );
};

export default App;
